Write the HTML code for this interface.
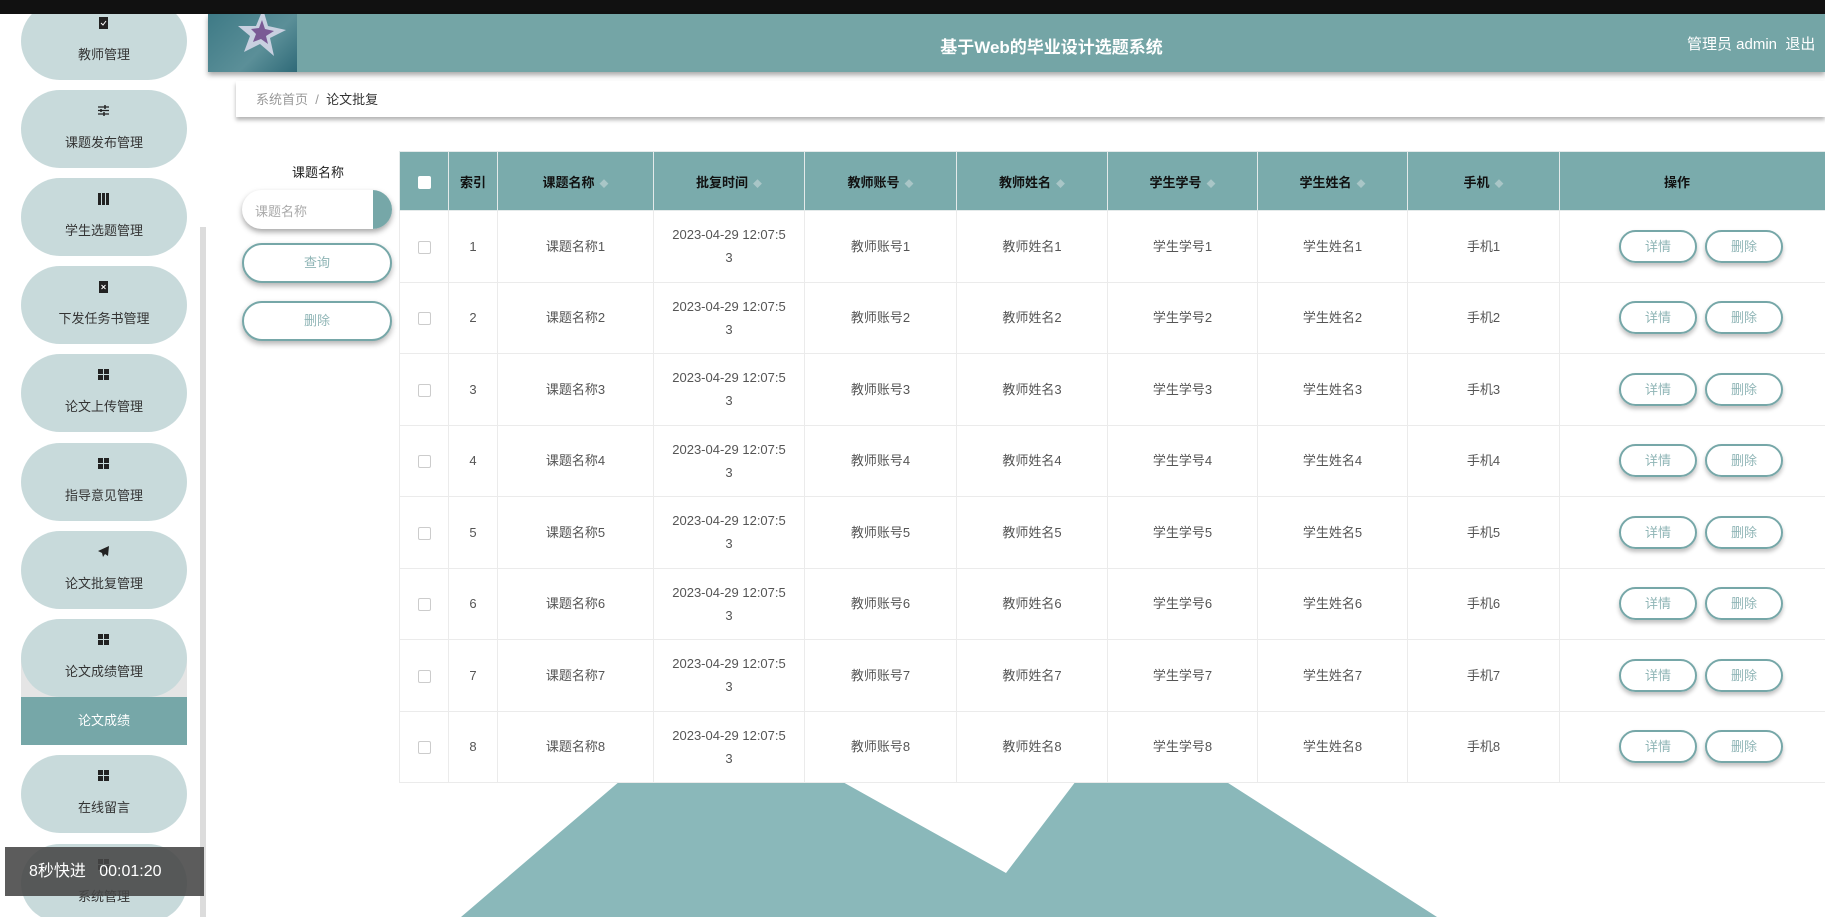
<!DOCTYPE html>
<html><head><meta charset="utf-8"><style>
*{margin:0;padding:0;box-sizing:border-box}
body{width:1825px;height:917px;overflow:hidden;background:#fff;font-family:"Liberation Sans","Noto Sans CJK SC",sans-serif;position:relative}
.topbar{position:absolute;left:0;top:0;width:1825px;height:14px;background:#111}
.side{position:absolute;left:0;top:14px;width:208px;height:903px;background:#fff;overflow:hidden}
.mi{position:absolute;left:21px;width:166px;height:78px;border-radius:39px;background:#c8dadb;text-align:center;font-size:13px;color:#333}
.mi .ic{position:absolute;left:76px;top:14px;width:13px;height:13px}
.mi span{position:absolute;left:0;right:0;top:42px}
.sb{position:absolute;left:200px;top:213px;width:6px;height:690px;background:#dcdcdc}
.hdr{position:absolute;left:208px;top:14px;width:1617px;height:58px;background:#74a5a6;box-shadow:0 3px 5px rgba(0,0,0,.35)}
.hdr .tex{position:absolute;left:0;top:0;width:89px;height:58px;background:linear-gradient(135deg,#3e7a86,#5b8f98 60%,#2f6a78)}
.title{position:absolute;left:70px;right:0;top:19px;text-align:center;color:#fff;font-weight:bold;font-size:17px}
.user{position:absolute;left:1479px;top:19px;color:#fff;font-size:15px;white-space:nowrap}
.bc{position:absolute;left:236px;top:81px;width:1589px;height:36px;background:#fff;box-shadow:0 3px 4px rgba(0,0,0,.3);font-size:13px;padding:8px 20px;color:#333}
.bc .g{color:#999}
.lbl{position:absolute;left:268px;top:162px;width:100px;text-align:center;font-size:13px;color:#222}
.inp{position:absolute;left:242px;top:190px;width:150px;height:39px;border-radius:20px;background:#fff;box-shadow:0 3px 6px rgba(0,0,0,.35);overflow:hidden;font-size:13px;color:#aaa;padding:11px 13px}
.inp i{position:absolute;right:0;top:0;width:19px;height:39px;background:#76a7a8}
.btn{position:absolute;left:242px;width:150px;height:40px;border:2px solid #76a7a8;border-radius:20px;background:#fff;box-shadow:0 3px 6px rgba(0,0,0,.3);text-align:center;font-size:13px;color:#8fb5b6;line-height:36px}
table{position:absolute;left:399px;top:151px;border-collapse:collapse;table-layout:fixed;width:1500px;background:#fff}
th{background:#7aabac;height:59px;font-size:13px;font-weight:bold;color:#111;border:1px solid #e4eaea}
td{height:71.5px;border:1px solid #ebebeb;text-align:center;font-size:13px;color:#555;line-height:23px;background:#fff}
.ar{color:#a9c6c7;font-size:9px;margin-left:5px}
.cb{display:inline-block;width:13px;height:13px;border:1px solid #ccc;border-radius:2px;background:#fff;vertical-align:middle}
.ab{display:inline-block;width:78px;height:33px;border:2px solid #76a7a8;border-radius:17px;box-shadow:0 3px 4px rgba(0,0,0,.25);color:#8fb5b6;line-height:29px;margin:0 4px}
.ov{position:absolute;left:5px;top:847px;width:199px;height:49px;background:rgba(70,70,70,.88);color:#fff;font-size:16px;line-height:49px;padding-left:24px;white-space:nowrap}
</style></head><body>
<div class="topbar"></div>
<svg style="position:absolute;left:0;top:0" width="1825" height="917"><polygon points="461,917 620,781 841,781 1006,873 1076,781 1225,781 1437,917" fill="#8ab8ba"/></svg>
<div class="side">
<div class="mi" style="top:-12px"><svg class="ic" viewBox="0 0 13 13"><rect x="2" y="1" width="9" height="12" fill="#222"/><path d="M4 7l2 2 3-4" stroke="#fff" fill="none"/></svg><span>教师管理</span></div>
<div class="mi" style="top:76px"><svg class="ic" viewBox="0 0 13 13"><path d="M1 3h11M1 6.5h11M1 10h11" stroke="#222" stroke-width="1.3"/><path d="M8 1v4M4 5v3M7 8v4" stroke="#222" stroke-width="1.5"/></svg><span>课题发布管理</span></div>
<div class="mi" style="top:164px"><svg class="ic" viewBox="0 0 13 13"><rect x="1" y="1" width="3" height="12" fill="#222"/><rect x="5" y="1" width="3" height="12" fill="#222"/><rect x="9" y="1" width="3" height="12" fill="#222"/></svg><span>学生选题管理</span></div>
<div class="mi" style="top:252px"><svg class="ic" viewBox="0 0 13 13"><rect x="2" y="1" width="9" height="12" fill="#222"/><path d="M4.5 5l4 4M8.5 5l-4 4" stroke="#fff"/></svg><span>下发任务书管理</span></div>
<div class="mi" style="top:340px"><svg class="ic" viewBox="0 0 13 13"><rect x="1" y="1" width="5" height="5" fill="#222"/><rect x="7" y="1" width="5" height="5" fill="#222"/><rect x="1" y="7" width="5" height="5" fill="#222"/><rect x="7" y="7" width="5" height="5" fill="#222"/></svg><span>论文上传管理</span></div>
<div class="mi" style="top:429px"><svg class="ic" viewBox="0 0 13 13"><rect x="1" y="1" width="5" height="5" fill="#222"/><rect x="7" y="1" width="5" height="5" fill="#222"/><rect x="1" y="7" width="5" height="5" fill="#222"/><rect x="7" y="7" width="5" height="5" fill="#222"/></svg><span>指导意见管理</span></div>
<div class="mi" style="top:517px"><svg class="ic" viewBox="0 0 13 13"><path d="M12 1L1 6l4 2 1 4 2-3 3 2z" fill="#222"/></svg><span>论文批复管理</span></div>
<div style="position:absolute;left:21px;top:645px;width:166px;height:40px;background:#e5e5e5"></div>
<div class="mi" style="top:605px"><svg class="ic" viewBox="0 0 13 13"><rect x="1" y="1" width="5" height="5" fill="#222"/><rect x="7" y="1" width="5" height="5" fill="#222"/><rect x="1" y="7" width="5" height="5" fill="#222"/><rect x="7" y="7" width="5" height="5" fill="#222"/></svg><span>论文成绩管理</span></div>
<div style="position:absolute;left:21px;top:683px;width:166px;height:48px;background:#76a7a8;color:#fff;font-size:13px;text-align:center;line-height:48px">论文成绩</div>
<div class="mi" style="top:741px"><svg class="ic" viewBox="0 0 13 13"><rect x="1" y="1" width="5" height="5" fill="#222"/><rect x="7" y="1" width="5" height="5" fill="#222"/><rect x="1" y="7" width="5" height="5" fill="#222"/><rect x="7" y="7" width="5" height="5" fill="#222"/></svg><span>在线留言</span></div>
<div class="mi" style="top:830px"><svg class="ic" viewBox="0 0 13 13"><rect x="1" y="1" width="5" height="5" fill="#222"/><rect x="7" y="1" width="5" height="5" fill="#222"/><rect x="1" y="7" width="5" height="5" fill="#222"/><rect x="7" y="7" width="5" height="5" fill="#222"/></svg><span>系统管理</span></div>
<div class="sb"></div>
</div>
<div class="hdr"><div class="tex"><svg width="89" height="58" viewBox="0 0 89 58"><polygon points="55,-5 60,12 78,16 62,24 66,42 52,30 36,38 42,22 30,12 48,12" fill="#c8d0e0"/><polygon points="54,6 57,15 66,17 58,22 60,30 53,25 45,28 48,20 43,15 51,14" fill="#7a5a95"/></svg></div>
<div class="title">基于Web的毕业设计选题系统</div>
<div class="user">管理员 admin &nbsp;退出</div></div>
<div class="bc"><span class="g">系统首页</span> <span class="g">&nbsp;/&nbsp;</span> 论文批复</div>
<div class="lbl">课题名称</div>
<div class="inp">课题名称<i></i></div>
<div class="btn" style="top:243px">查询</div>
<div class="btn" style="top:301px">删除</div>
<table>
<colgroup><col style="width:49px"><col style="width:49px"><col style="width:156px"><col style="width:151px"><col style="width:152px"><col style="width:151px"><col style="width:150px"><col style="width:150px"><col style="width:152px"><col style="width:340px"></colgroup>
<tr><th><span class="cb" style="border:none"></span></th><th>索引</th><th>课题名称<span class="ar">◆</span></th><th>批复时间<span class="ar">◆</span></th><th>教师账号<span class="ar">◆</span></th><th>教师姓名<span class="ar">◆</span></th><th>学生学号<span class="ar">◆</span></th><th>学生姓名<span class="ar">◆</span></th><th>手机<span class="ar">◆</span></th><th style="text-align:left;padding-left:104px">操作</th></tr>
<tr><td><span class="cb"></span></td><td>1</td><td>课题名称1</td><td>2023-04-29 12:07:5<br>3</td><td>教师账号1</td><td>教师姓名1</td><td>学生学号1</td><td>学生姓名1</td><td>手机1</td><td style="text-align:left;padding-left:55px"><span class="ab" style="text-align:center">详情</span><span class="ab" style="text-align:center">删除</span></td></tr>
<tr><td><span class="cb"></span></td><td>2</td><td>课题名称2</td><td>2023-04-29 12:07:5<br>3</td><td>教师账号2</td><td>教师姓名2</td><td>学生学号2</td><td>学生姓名2</td><td>手机2</td><td style="text-align:left;padding-left:55px"><span class="ab" style="text-align:center">详情</span><span class="ab" style="text-align:center">删除</span></td></tr>
<tr><td><span class="cb"></span></td><td>3</td><td>课题名称3</td><td>2023-04-29 12:07:5<br>3</td><td>教师账号3</td><td>教师姓名3</td><td>学生学号3</td><td>学生姓名3</td><td>手机3</td><td style="text-align:left;padding-left:55px"><span class="ab" style="text-align:center">详情</span><span class="ab" style="text-align:center">删除</span></td></tr>
<tr><td><span class="cb"></span></td><td>4</td><td>课题名称4</td><td>2023-04-29 12:07:5<br>3</td><td>教师账号4</td><td>教师姓名4</td><td>学生学号4</td><td>学生姓名4</td><td>手机4</td><td style="text-align:left;padding-left:55px"><span class="ab" style="text-align:center">详情</span><span class="ab" style="text-align:center">删除</span></td></tr>
<tr><td><span class="cb"></span></td><td>5</td><td>课题名称5</td><td>2023-04-29 12:07:5<br>3</td><td>教师账号5</td><td>教师姓名5</td><td>学生学号5</td><td>学生姓名5</td><td>手机5</td><td style="text-align:left;padding-left:55px"><span class="ab" style="text-align:center">详情</span><span class="ab" style="text-align:center">删除</span></td></tr>
<tr><td><span class="cb"></span></td><td>6</td><td>课题名称6</td><td>2023-04-29 12:07:5<br>3</td><td>教师账号6</td><td>教师姓名6</td><td>学生学号6</td><td>学生姓名6</td><td>手机6</td><td style="text-align:left;padding-left:55px"><span class="ab" style="text-align:center">详情</span><span class="ab" style="text-align:center">删除</span></td></tr>
<tr><td><span class="cb"></span></td><td>7</td><td>课题名称7</td><td>2023-04-29 12:07:5<br>3</td><td>教师账号7</td><td>教师姓名7</td><td>学生学号7</td><td>学生姓名7</td><td>手机7</td><td style="text-align:left;padding-left:55px"><span class="ab" style="text-align:center">详情</span><span class="ab" style="text-align:center">删除</span></td></tr>
<tr><td><span class="cb"></span></td><td>8</td><td>课题名称8</td><td>2023-04-29 12:07:5<br>3</td><td>教师账号8</td><td>教师姓名8</td><td>学生学号8</td><td>学生姓名8</td><td>手机8</td><td style="text-align:left;padding-left:55px"><span class="ab" style="text-align:center">详情</span><span class="ab" style="text-align:center">删除</span></td></tr>
</table>
<div class="ov">8秒快进 &nbsp; 00:01:20</div>
</body></html>
